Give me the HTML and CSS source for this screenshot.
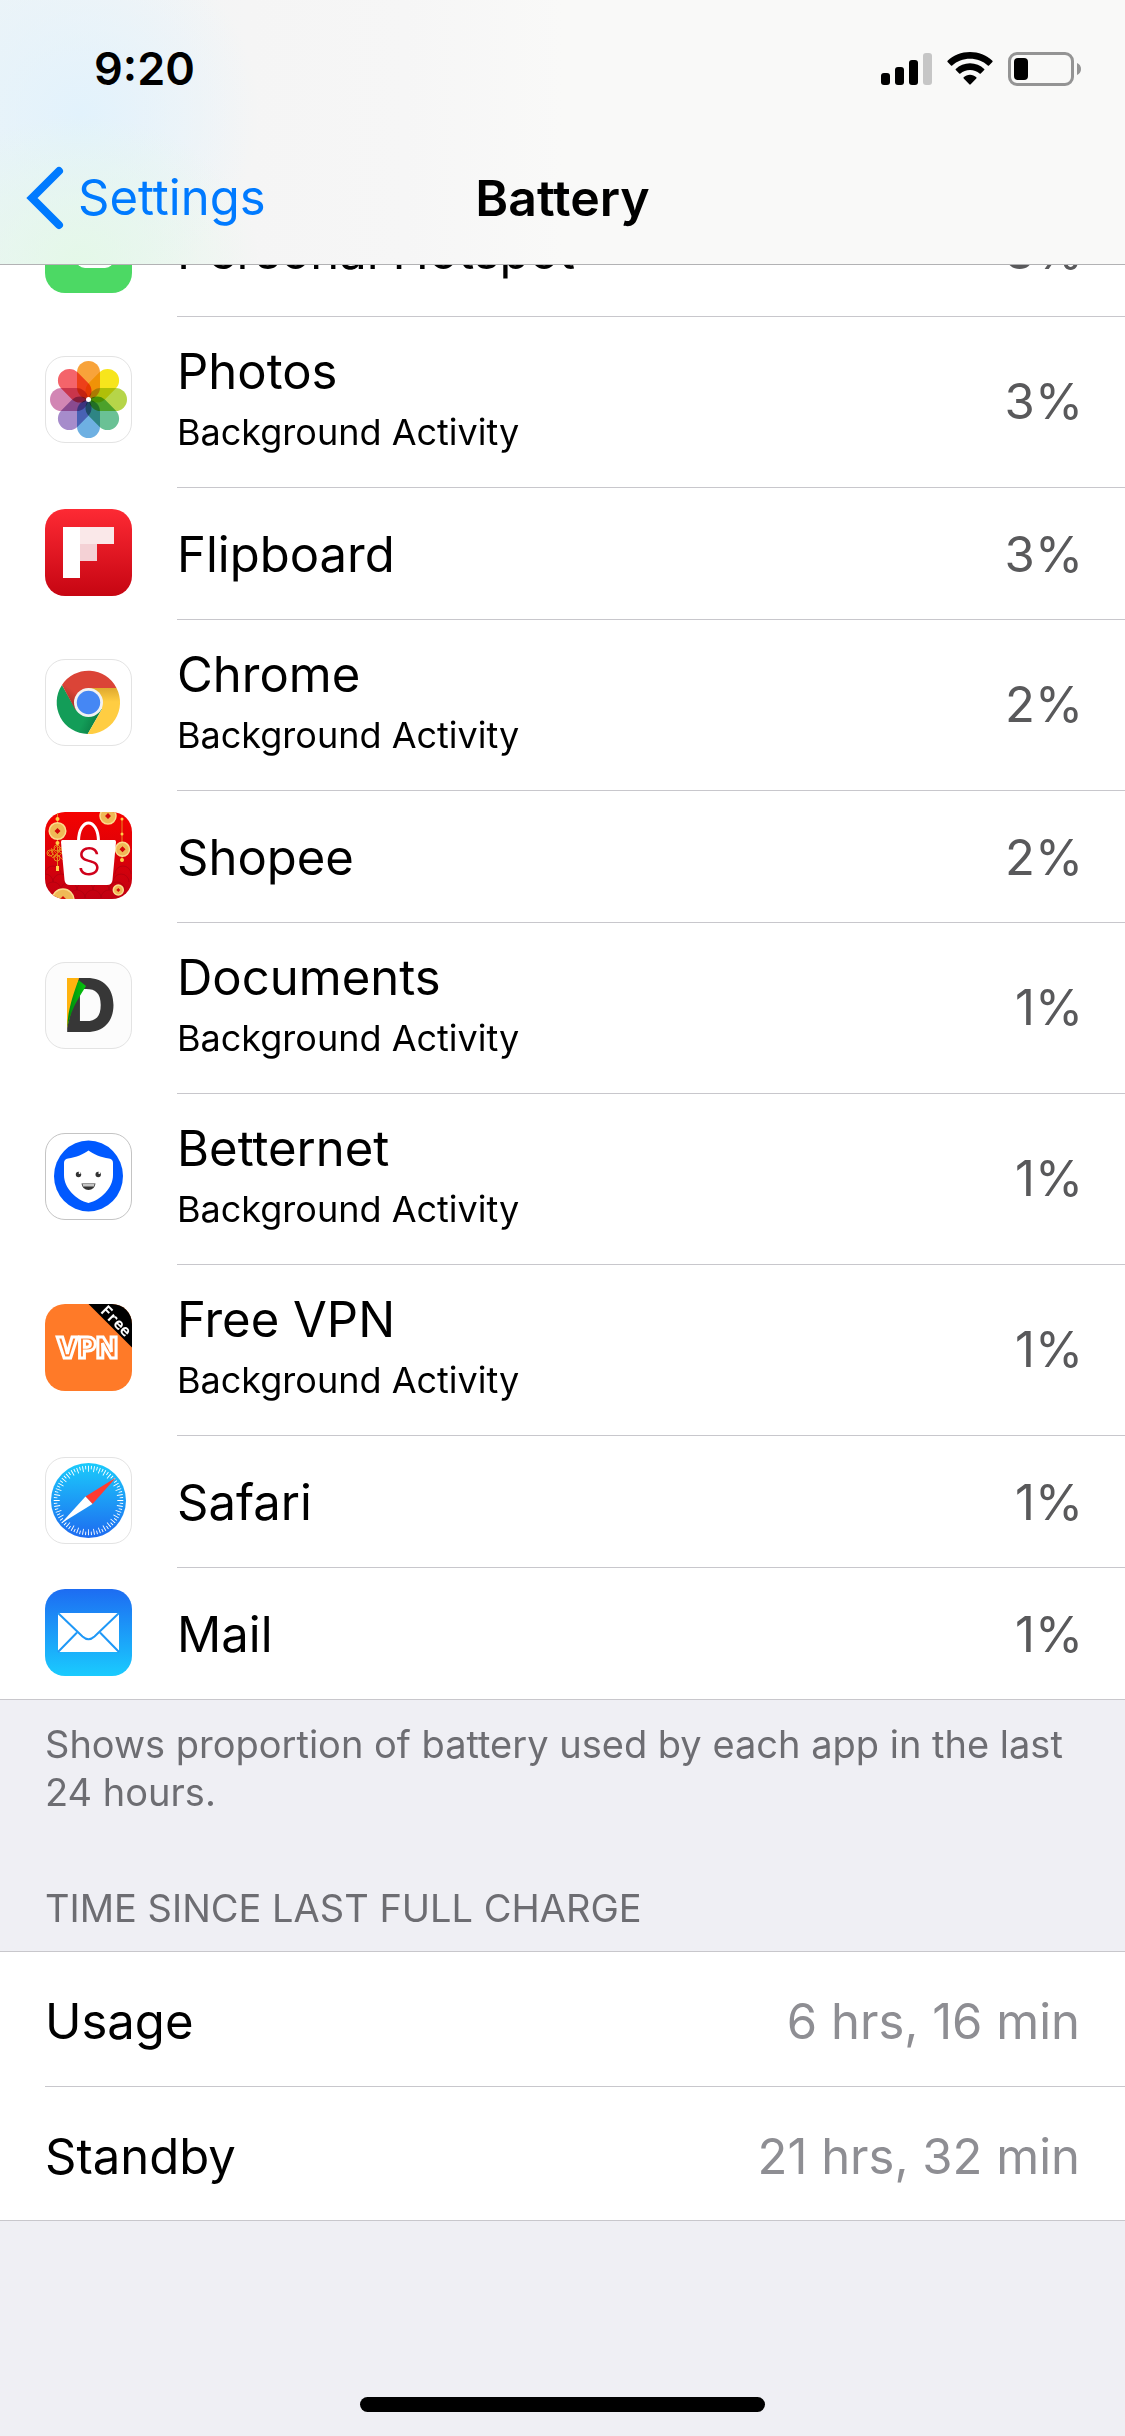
FILE: index.html
```html
<!DOCTYPE html>
<html lang="en">
<head>
  <meta charset="UTF-8" />
  <meta name="viewport" content="width=device-width, initial-scale=1.0" />
  <title>Battery</title>
  <link rel="stylesheet" href="styles.css">
</head>
<body>
  <header class="topbar">
    <div class="status">
      <span class="time">9:20</span>
      <div class="status-icons">
        <svg width="51" height="34" viewBox="0 0 51 34" aria-hidden="true">
          <rect x="0" y="21" width="9" height="12" rx="3" />
          <rect x="14" y="15" width="9" height="18" rx="3" />
          <rect x="28" y="8" width="9" height="25" rx="3" />
          <rect x="42" y="1" width="9" height="32" rx="3" fill="#c6c6c6" />
        </svg>
        <svg width="46" height="34" viewBox="0 0 46 34" aria-hidden="true">
          <path d="M23 0C14.500 0 6.500 3.300 .6 8.800Q0 9.400.6 10L4 13.400Q4.600 14 5.200 13.400C10 9 16.200 6.700 23 6.700S36 9 40.800 13.400Q41.400 14 42 13.400L45.400 10Q46 9.400 45.400 8.800C39.500 3.300 31.500 0 23 0Z" />
          <path d="M23 11.200C17.500 11.200 12.500 13.300 8.800 16.900Q8.200 17.500 8.800 18.100L12.200 21.500Q12.800 22.100 13.400 21.500C16 19.200 19.300 18 23 18S30 19.200 32.600 21.500Q33.200 22.100 33.800 21.500L37.200 18.100Q37.800 17.500 37.200 16.900C33.500 13.300 28.500 11.200 23 11.200Z" />
          <path d="M23 22.800C20.600 22.800 18.400 23.700 16.700 25.200Q16.100 25.800 16.700 26.400L22.300 32.300Q23 33 23.700 32.300L29.300 26.400Q29.900 25.800 29.300 25.200C27.600 23.700 25.400 22.800 23 22.800Z" />
        </svg>
        <svg width="73" height="34" viewBox="0 0 73 34" aria-hidden="true">
          <rect x="1.500" y="1.500" width="63" height="31" rx="7.500" fill="none" stroke="#949494" stroke-width="3" />
          <rect x="6" y="6" width="14" height="22" rx="4" />
          <path d="M69 11C71.500 12 73 14.300 73 17S71.500 22 69 23Z" fill="#949494" />
        </svg>
      </div>
    </div>
    <nav class="nav">
      <a class="back" href="#settings">
        <svg width="38" height="64" viewBox="0 0 38 64" aria-hidden="true"><path d="M33 5L6 32L33 59" fill="none" stroke="#007aff" stroke-width="8" stroke-linecap="round" stroke-linejoin="miter" /></svg>
        <span>Settings</span>
      </a>
      <h1>Battery</h1>
    </nav>
  </header>

  <main class="main">
    <ul class="app-list">
      <li class="app">
        <svg class="app-icon" viewBox="0 0 87 87" aria-hidden="true">
          <rect width="87" height="87" rx="20" fill="#4cd964" />
          <rect x="31" y="34" width="38" height="28" rx="9" fill="#fff" />
        </svg>
        <div class="app-body">
          <div class="app-text"><p class="app-name">Personal Hotspot</p></div>
          <span class="percent">3%</span>
        </div>
      </li>
      <li class="app tall">
        <svg class="app-icon" viewBox="0 0 87 87" aria-hidden="true">
          <rect x="0.500" y="0.500" width="86" height="86" rx="19.500" fill="#fff" stroke="#e3e3e3" />
          <g class="petals">
            <rect x="32" y="5" width="23" height="38" rx="11.500" fill="#f8a33a" />
            <rect x="32" y="5" width="23" height="38" rx="11.500" fill="#f7e51c" transform="rotate(45 43.500 43.500)" />
            <rect x="32" y="5" width="23" height="38" rx="11.500" fill="#b6d549" transform="rotate(90 43.500 43.500)" />
            <rect x="32" y="5" width="23" height="38" rx="11.500" fill="#6ac195" transform="rotate(135 43.500 43.500)" />
            <rect x="32" y="5" width="23" height="38" rx="11.500" fill="#6eb0e2" transform="rotate(180 43.500 43.500)" />
            <rect x="32" y="5" width="23" height="38" rx="11.500" fill="#a68ccb" transform="rotate(225 43.500 43.500)" />
            <rect x="32" y="5" width="23" height="38" rx="11.500" fill="#d286b4" transform="rotate(270 43.500 43.500)" />
            <rect x="32" y="5" width="23" height="38" rx="11.500" fill="#f4646a" transform="rotate(315 43.500 43.500)" />
          </g>
          <circle cx="43.500" cy="43.500" r="2.500" fill="#fff" />
        </svg>
        <div class="app-body">
          <div class="app-text"><p class="app-name">Photos</p><p class="app-note">Background Activity</p></div>
          <span class="percent">3%</span>
        </div>
      </li>
      <li class="app">
        <svg class="app-icon" viewBox="0 0 87 87" aria-hidden="true">
          <linearGradient id="flip" x2="0" y2="1"><stop stop-color="#fd2a34" /><stop offset="1" stop-color="#c60512" /></linearGradient>
          <rect width="87" height="87" rx="20" fill="url(#flip)" />
          <path d="M18 18H35V69H18Z" fill="#fff" />
          <path d="M35 18H69V35H35Z" fill="#fae8e9" />
          <path d="M35 35H52V52H35Z" fill="#f4d1d5" />
        </svg>
        <div class="app-body">
          <div class="app-text"><p class="app-name">Flipboard</p></div>
          <span class="percent">3%</span>
        </div>
      </li>
      <li class="app tall">
        <svg class="app-icon" viewBox="0 0 87 87" aria-hidden="true">
          <linearGradient id="redshade" x1="0.200" y1="0.900" x2="0.400" y2="0.700"><stop stop-color="#a93226" /><stop offset="1" stop-color="#db4437" /></linearGradient>
          <linearGradient id="yellowshade" x2="0" y2="1"><stop stop-color="#dfa92f" /><stop offset="0.300" stop-color="#ffcd42" /></linearGradient>
          <linearGradient id="greenshade" x1="0.950" y1="0.750" x2="0.650" y2="0.600"><stop stop-color="#0b7a44" /><stop offset="1" stop-color="#139d58" /></linearGradient>
          <rect x="0.500" y="0.500" width="86" height="86" rx="19.500" fill="#fff" stroke="#e3e3e3" />
          <path d="M17 26A31.500 31.500 0 0 0 42.700 75L57 50L31 51Z" fill="url(#greenshade)" />
          <path d="M43.500 29H71.500A31.500 31.500 0 0 1 42.700 75L57 50Z" fill="url(#yellowshade)" />
          <path d="M43.500 29H71.500A31.500 31.500 0 0 0 17 26L30.500 51Z" fill="url(#redshade)" />
          <circle cx="43.500" cy="43.500" r="14.500" fill="#f1f1f1" />
          <circle cx="43.500" cy="43.500" r="11.700" fill="#4587f4" />
        </svg>
        <div class="app-body">
          <div class="app-text"><p class="app-name">Chrome</p><p class="app-note">Background Activity</p></div>
          <span class="percent">2%</span>
        </div>
      </li>
      <li class="app">
        <svg class="app-icon" viewBox="0 0 87 87" aria-hidden="true">
          <linearGradient id="shop" x2="0" y2="1"><stop stop-color="#f50200" /><stop offset="1" stop-color="#c10012" /></linearGradient>
          <clipPath id="shopclip"><rect width="87" height="87" rx="20" /></clipPath>
          <g clip-path="url(#shopclip)">
            <rect width="87" height="87" fill="url(#shop)" />
            <g fill="none" stroke="#a80010" opacity="0.600">
              <path d="M0 62a8 8 0 0 1 16 0M-8 70a8 8 0 0 1 16 0a8 8 0 0 1 16 0M0 78a8 8 0 0 1 16 0a8 8 0 0 1 16 0a8 8 0 0 1 16 0a8 8 0 0 1 16 0a8 8 0 0 1 16 0M24 86a8 8 0 0 1 16 0a8 8 0 0 1 16 0a8 8 0 0 1 16 0M70 62a8 8 0 0 1 16 0M68 70a8 8 0 0 1 16 0" />
            </g>
            <g fill="none" stroke="#e58a20">
              <path d="M12.500 0V58M77 6V50" />
              <path d="M3 41l4-4 12 12M3 41l5 5 11-11M7 46l10-10M6 36l12 12M12 34l6 6-6 6-6-6z" stroke="#e56a10" />
              <circle cx="5" cy="41" r="3" /><circle cx="12" cy="36" r="3" /><circle cx="17" cy="38" r="3" /><circle cx="12" cy="46" r="3" />
            </g>
            <g fill="#ffd04a"><circle cx="12.500" cy="7" r="2" /><circle cx="12.500" cy="31" r="2" /><rect x="11" y="54" width="3" height="5" /><circle cx="77" cy="7" r="1.500" /><circle cx="77" cy="22" r="1.500" /><circle cx="77" cy="48" r="2" /></g>
            <g fill="#efb956" stroke="#fbdc8d" stroke-width="1.500">
              <circle cx="12.500" cy="19" r="8.300" /><circle cx="63" cy="4" r="8" /><circle cx="77.500" cy="37.300" r="7" /><circle cx="73.300" cy="78" r="5" /><circle cx="18" cy="88" r="11" />
            </g>
            <path d="M12.500 16l3 3-3 3-3-3zM63 1l3 3-3 3-3-3zM77.500 34.300l3 3-3 3-3-3zM73.300 76l2 2-2 2-2-2zM18 84l4 4h-8z" fill="#d40808" />
            <path d="M33.500 29C34 5 53 5 53.500 29" fill="none" stroke="#fff" stroke-width="3" />
            <path d="M17.500 28H69.500Q71 28 71 30L67.500 68Q67 73 62 73H25Q20 73 19.500 68L16 30Q16 28 17.500 28Z" fill="#fff" />
          </g>
          <text class="shop-letter" x="44" y="63">S</text>
        </svg>
        <div class="app-body">
          <div class="app-text"><p class="app-name">Shopee</p></div>
          <span class="percent">2%</span>
        </div>
      </li>
      <li class="app tall">
        <svg class="app-icon" viewBox="0 0 87 87" aria-hidden="true">
          <linearGradient id="fold"><stop stop-color="#00850c" /><stop offset="1" stop-color="#06c80e" /></linearGradient>
          <rect x="0.500" y="0.500" width="86" height="86" rx="19.500" fill="#fcfcfc" stroke="#e3e3e3" />
          <text class="doc-letter" x="18" y="70">D</text>
          <path d="M22 16H34L30 34L22 66Z" fill="#ffb30f" />
          <path d="M33.500 18L41 24C33 37 26 47 22.500 65C22 52 28 32 33.500 18Z" fill="url(#fold)" />
        </svg>
        <div class="app-body">
          <div class="app-text"><p class="app-name">Documents</p><p class="app-note">Background Activity</p></div>
          <span class="percent">1%</span>
        </div>
      </li>
      <li class="app tall">
        <svg class="app-icon" viewBox="0 0 87 87" aria-hidden="true">
          <rect x="0.500" y="0.500" width="86" height="86" rx="19.500" fill="#fff" stroke="#c4c4c4" />
          <ellipse cx="43.500" cy="43" rx="34.500" ry="35.500" fill="#0059ff" />
          <path d="M43.500 17.500C48 21 56 24.500 64 25.500Q68 26 68 30V42C68 55 56 67 43.500 70C31 67 19 55 19 42V30Q19 26 23 25.500C31 24.500 39 21 43.500 17.500Z" fill="#fff" />
          <g fill="#333"><circle cx="33.500" cy="41.500" r="2.700" /><circle cx="53.200" cy="41.500" r="2.700" /></g>
          <g fill="#fff"><circle cx="34.600" cy="40" r="1" /><circle cx="54.300" cy="40" r="1" /></g>
          <path d="M36.500 50.500H50.500Q49.500 57 43.500 57T36.500 50.500Z" fill="#333" />
          <path d="M37.500 51H49.500L49 53.500H38Z" fill="#c4c4c4" />
        </svg>
        <div class="app-body">
          <div class="app-text"><p class="app-name">Betternet</p><p class="app-note">Background Activity</p></div>
          <span class="percent">1%</span>
        </div>
      </li>
      <li class="app tall">
        <svg class="app-icon" viewBox="0 0 87 87" aria-hidden="true">
          <clipPath id="vpnclip"><rect width="87" height="87" rx="20" /></clipPath>
          <g clip-path="url(#vpnclip)">
            <rect width="87" height="87" fill="#ff7a28" />
            <path d="M43.500 0H87V43.500Z" fill="#000" />
          </g>
          <text class="vpn-free" x="71" y="22" transform="rotate(45 71 17)">Free</text>
          <text class="vpn-name" x="42" y="54">VPN</text>
        </svg>
        <div class="app-body">
          <div class="app-text"><p class="app-name">Free VPN</p><p class="app-note">Background Activity</p></div>
          <span class="percent">1%</span>
        </div>
      </li>
      <li class="app">
        <svg class="app-icon" viewBox="0 0 87 87" aria-hidden="true">
          <linearGradient id="safari" x2="0" y2="1"><stop stop-color="#1bcbfb" /><stop offset="1" stop-color="#1e6bf0" /></linearGradient>
          <rect x="0.500" y="0.500" width="86" height="86" rx="19.500" fill="#fff" stroke="#e3e3e3" />
          <circle cx="43.500" cy="43.500" r="37.500" fill="url(#safari)" />
          <g fill="none" stroke="#fff">
            <circle cx="43.500" cy="43.500" r="31.800" stroke-width="6" pathLength="360" stroke-dasharray="1.600 8.400" stroke-dashoffset="0.800" />
            <circle cx="43.500" cy="43.500" r="33" stroke-width="3.500" pathLength="360" stroke-dasharray="1.600 8.400" stroke-dashoffset="5.800" />
          </g>
          <path d="M71 20.500L40.500 39.500L47.500 47Z" fill="#ff3b30" />
          <path d="M16 66.500L40.500 39.500L47.500 47Z" fill="#fff" />
        </svg>
        <div class="app-body">
          <div class="app-text"><p class="app-name">Safari</p></div>
          <span class="percent">1%</span>
        </div>
      </li>
      <li class="app">
        <svg class="app-icon" viewBox="0 0 87 87" aria-hidden="true">
          <linearGradient id="mail" x2="0" y2="1"><stop stop-color="#1d6cf2" /><stop offset="1" stop-color="#1acbfe" /></linearGradient>
          <rect width="87" height="87" rx="20" fill="url(#mail)" />
          <rect x="13" y="24" width="61" height="39" fill="#fff" />
          <g fill="none" stroke="#1f98f7" stroke-width="2">
            <path d="M13 24L37.500 47.500Q43.500 53 49.500 47.500L74 24" />
            <path d="M32 43.500L13 63M55 43.500L74 63" />
          </g>
        </svg>
        <div class="app-body">
          <div class="app-text"><p class="app-name">Mail</p></div>
          <span class="percent">1%</span>
        </div>
      </li>
    </ul>
    <p class="footnote">Shows proportion of battery used by each app in the last 24 hours.</p>

    <h2>TIME SINCE LAST FULL CHARGE</h2>
    <dl class="times">
      <div class="time-row">
        <dt>Usage</dt>
        <dd>6 hrs, 16 min</dd>
      </div>
      <div class="time-row">
        <dt>Standby</dt>
        <dd>21 hrs, 32 min</dd>
      </div>
    </dl>
  </main>
  <div class="home-bar"></div>
</body>
</html>
```
FILE: styles.css
```css
* {
  box-sizing: border-box;
  margin: 0;
  padding: 0;
}
body {
  background-color: #efeff4;
  color: #000;
  font-family: Inter, "Liberation Sans", sans-serif;
  font-size: 49px;
  line-height: 60px;
  min-height: 100vh;
  display: flex;
  flex-direction: column;
}

/* status bar and navigation */
.topbar {
  position: relative;
  z-index: 1;
  background:
    radial-gradient(ellipse 180px 150px at 80px 264px, #e4f8e8, transparent),
    radial-gradient(ellipse 180px 180px at 80px 115px, #e2f2fc, transparent),
    linear-gradient(90deg, #edf4f7, #f5f5f5 22%, #f6f6f6 36%, #f9f9f8 50%, #f9f9f8);
  border-bottom: 1px solid #b2b2b4;
}
.status {
  height: 132px;
  padding: 6px 44px 0 94px;
  display: flex;
  justify-content: space-between;
  align-items: center;
}
.time {
  font-size: 45px;
  font-weight: 600;
}
.status-icons {
  display: flex;
  gap: 15px;
}
.nav {
  height: 132px;
  padding: 0 26px;
  display: grid;
  grid-template-columns: 1fr auto 1fr;
  align-items: center;
}
.back {
  display: flex;
  align-items: center;
  gap: 14px;
  color: #007aff;
  text-decoration: none;
}
h1 {
  font-size: 50px;
  font-weight: 600;
}

/* app list, first row sits partly under the bar */
.app-list {
  list-style: none;
  background: #fff;
  margin-top: -80px;
  border-bottom: 1px solid #c8c7cc;
}
.app {
  display: flex;
  align-items: center;
  gap: 45px;
  padding-left: 45px;
}
.app-icon {
  width: 87px;
  height: 87px;
  flex-shrink: 0;
  margin-bottom: 3px;
  overflow: visible;
}
.app-body {
  flex: 1;
  min-height: 132px;
  padding: 2px 42px 0 0;
  display: flex;
  align-items: center;
  justify-content: space-between;
  border-bottom: 1px solid #c8c7cc;
}
.app:last-child .app-body {
  min-height: 131px;
  border-bottom: none;
}
.tall .app-icon {
  margin-bottom: 6px;
}
.tall .app-body {
  min-height: 171px;
  padding-top: 0;
}
.app-note {
  font-size: 36px;
}
.percent {
  color: #59595b;
}
.petals rect {
  mix-blend-mode: multiply;
}
.shop-letter {
  font-size: 38px;
  font-weight: 300;
  text-anchor: middle;
  fill: #d0011b;
}
.doc-letter {
  font-size: 74px;
  font-weight: 800;
  fill: #373737;
}
.vpn-free {
  font-family: "DejaVu Sans Mono", monospace;
  font-size: 15px;
  font-weight: 700;
  text-anchor: middle;
  fill: #fff;
}
.vpn-name {
  font-size: 28px;
  font-weight: 800;
  text-anchor: middle;
  fill: #ff7a28;
  stroke: #fff;
  stroke-width: 3;
}

.footnote {
  padding: 20px 45px 0;
  font-size: 38px;
  line-height: 48px;
  color: #6d6d72;
}
h2 {
  padding: 62px 45px 13px;
  font-size: 38px;
  font-weight: 400;
  color: #6d6d72;
}

/* usage times */
.times {
  background: #fff;
  border-top: 1px solid #c8c7cc;
  border-bottom: 1px solid #c8c7cc;
  padding-left: 45px;
}
.time-row {
  min-height: 134px;
  padding: 6px 45px 0 0;
  display: flex;
  align-items: center;
  justify-content: space-between;
}
.time-row + .time-row {
  border-top: 1px solid #c8c7cc;
}
.time-row dd {
  color: #8e8e93;
}

.home-bar {
  width: 36%;
  height: 15px;
  margin: auto auto 24px;
  border-radius: 8px;
  background: #000;
}
```
